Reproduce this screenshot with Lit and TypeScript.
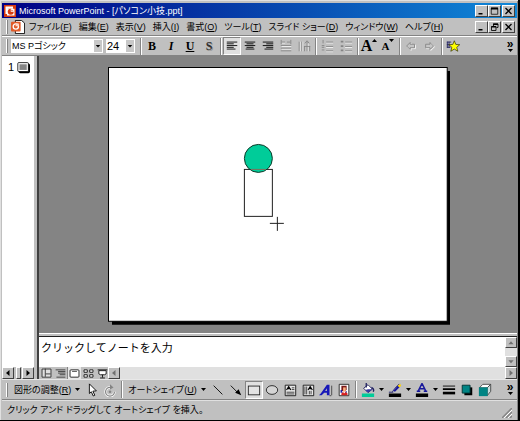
import { LitElement, html, svg, css, type TemplateResult } from "lit";
import { customElement, property } from "lit/decorators.js";
import { classMap } from "lit/directives/class-map.js";

const ICONS: Record<string, TemplateResult> = {
  app: svg`<rect width="16" height="16" fill="#d63c10"/><path d="M2 2h10v3H5v7H2z" fill="#fff"/><path d="M4 5h10v9H4z" fill="#fff"/><circle cx="9" cy="9" r="4" fill="#d63c10"/><path d="M9 9V4.500A4.500 4.500 0 0 1 13.500 9z" fill="#fff"/><path d="M10 8V6l2 2z" fill="#d63c10"/>`,
  doc: svg`<path d="M5 .5h7l3.500 3v12H5z" fill="#fff" stroke="#000"/><rect y="2" width="11" height="11" rx="1" fill="#e05a28"/><circle cx="5.500" cy="7.500" r="3" fill="none" stroke="#fff" stroke-width="1.500"/><path d="M5 7h4V4H6z" fill="#ffd8c8"/>`,
  left: svg`<path d="M2 3.500h12M2 5.500h8M2 7.500h12M2 9.500h8M2 11.500h10" stroke="#000"/>`,
  center: svg`<path d="M2 3.500h12M4 5.500h8M2 7.500h12M4 9.500h8M3 11.500h10" stroke="#000"/>`,
  right: svg`<path d="M2 3.500h12M6 5.500h8M2 7.500h12M6 9.500h8M4 11.500h10" stroke="#000"/>`,
  distribute: svg`<path d="M3 4.500h4M3 8.500h11M3 11.500h11" stroke="#fff"/><path d="M2.500 1v5M13.500 1v5M3 3.500h4M9 3.500h4M2 7.500h12M2 10.500h12M2 13.500h12" stroke="#848484"/>`,
  vertical: svg`<path d="M3.500 3v11M6.500 3v11M12.500 5v9" stroke="#fff"/><path d="M2.500 3v11M5.500 3v11M8.500 8v6M11.500 3v11M9 5l2.500-3L14 5M14.500 8v6M8 8.500h7" fill="none" stroke="#848484"/>`,
  numbers: svg`<path d="M7 4.500h8M7 9.500h8M7 14.500h8" stroke="#fff"/><path d="M3.500 1v4M2 7.500h3M2 9.500h3M2 12.500h3M7 3.500h8M7 8.500h8M7 13.500h8" stroke="#848484"/>`,
  bullets: svg`<path d="M7 4.500h8M7 9.500h8M7 14.500h8" stroke="#fff"/><path d="M2 2h3v2H2zM2 7h3v2H2zM2 12h3v2H2z" fill="#848484"/><path d="M7 3.500h8M7 8.500h8M7 13.500h8" stroke="#848484"/>`,
  back: svg`<path d="M8 5L4 9l4 4v-2h5V7H8z" fill="none" stroke="#fff"/><path d="M7 4L3 8l4 4v-2h5V6H7z" fill="#c6c6c6" stroke="#848484"/>`,
  forward: svg`<path d="M9 5l4 4-4 4v-2H4V7h5z" fill="none" stroke="#fff"/><path d="M8 4l4 4-4 4v-2H3V6h5z" fill="#c6c6c6" stroke="#848484"/>`,
  star: svg`<path d="M1 3.500h5M1 6.500h3M1 9.500h4M1.500 3v7M3.500 3v7" stroke="#202060"/><path d="M9.500 2l1.700 4.200 4.500.3-3.400 3 1.200 4.500-4-2.500-4 2.500 1.200-4.500-3.400-3 4.500-.3z" fill="#ffff00" stroke="#303000" stroke-width=".8"/>`,
  pointer: svg`<path d="M5 1l8 8-4 .3 2.200 4.700-1.800.8L7.200 10 5 12z" fill="#fff" stroke="#000"/>`,
  rotate: svg`<path d="M13 10a5 5 0 1 1-5-5" fill="none" stroke="#fff" stroke-width="3"/><path d="M13 10a5 5 0 1 1-5-5" fill="none" stroke="#848484" stroke-width="1.500"/><path d="M8 1.500v6L12 5z" fill="#848484"/><circle cx="8" cy="10" r="1.500" fill="#848484"/>`,
  line: svg`<path d="M3 3l10 10" stroke="#000"/>`,
  arrow: svg`<path d="M2 3l8 8" stroke="#000"/><path d="M14 14L7 11l4-4z" fill="#000"/>`,
  rect: svg`<rect x="1.500" y="3.500" width="13" height="10" fill="#e4e4e4" stroke="#202020"/>`,
  oval: svg`<ellipse cx="8" cy="8" rx="6.500" ry="5" fill="#d4d4d4" stroke="#202020"/>`,
  textbox: svg`<path d="M2.500 2.500h12v12h-12z" fill="#e8e8e8" stroke="#101010"/><path d="M4 8l2.500-4L9 8M5 6.500h3" fill="none" stroke="#000" stroke-width="1.300"/><path d="M10 5.500h3M10 7.500h3M4 10.500h9M4 12.500h9" stroke="#303030"/>`,
  vtextbox: svg`<path d="M2.500 2.500h12v12h-12z" fill="#e8e8e8" stroke="#101010"/><path d="M8 8l2.500-4L13 8M9 6.500h3" fill="none" stroke="#000" stroke-width="1.300"/><path d="M4.500 4v9M6.500 4v9M9.500 9v4M11.500 9v4" stroke="#303030"/>`,
  wordart: svg`<path d="M0 14l2-2 7-10h3v12H9v-3H6l-3 3zM7 9h2V6z" fill="#1818b8" fill-rule="evenodd"/><path d="M14.500 3v11M12 14.500h2" stroke="#404040"/>`,
  clipart: svg`<path d="M2.500 1.500h11v13h-11z" fill="#fff" stroke="#202020"/><path d="M5 3h6v4l-1 2H5z" fill="#7a1818"/><path d="M7 5h3v5H7z" fill="#ffb080"/><path d="M5 14v-2l2-2 1 2 2-2 2 2v2z" fill="#d82020"/><path d="M4 8h2v3H4zM10 9h1v2h-1z" fill="#2020a0"/>`,
  fill: svg`<path d="M3 6l5-4 5 5-5 4z" fill="#fff" stroke="#202060"/><path d="M8 7l5 0-5 4-3-3z" fill="#3838a0"/><path d="M6 0v5M12 5c2 1 3 3 2 5" stroke="#202060" fill="none" stroke-width="1.500"/><path d="M1 12h14v4H1z" fill="#00cc99"/>`,
  pen: svg`<path d="M1 10.500h5M5 10l3-4 5-5" stroke="#18186c" fill="none"/><path d="M6 9l5-6 3 1-6 6z" fill="#18189c"/><path d="M11 3l3-2 1 2-2 2z" fill="#ffd800"/><path d="M1 12h14v4H1z" fill="#000"/>`,
  fontcolor: svg`<path d="M3.500 9.500L8 .5l4.500 9M5.500 6.500h5M2 9.500h4M10 9.500h4" fill="none" stroke="#18189c" stroke-width="1.700"/><path d="M1 12h14v4H1z" fill="#000"/>`,
  weights: svg`<path d="M1 3.500h14" stroke="#000"/><path d="M1 7h14" stroke="#000" stroke-width="2"/><path d="M1 11.500h14" stroke="#000" stroke-width="3"/>`,
  shadow: svg`<path d="M5 5h9v9H5z" fill="#000"/><path d="M2.500 2.500h9v9h-9z" fill="#008484" stroke="#003030"/>`,
  cube: svg`<path d="M1.500 5.500l4-4h9l-4 4z" fill="#fff" stroke="#404040"/><path d="M10.500 5.500l4-4v8l-4 5z" fill="#c8dcdc" stroke="#404040"/><path d="M1 5h10v10H1z" fill="#008484"/>`,
  normalview: svg`<path d="M2.500 2.500h11v10h-11zM6.500 2v10M7 8.500h6" fill="#e0e0e0" stroke="#202020"/>`,
  outline: svg`<path d="M2 3.500h12M5 5.500h9M5 7.500h9M7 9.500h7M3 12.500h11" stroke="#303030"/>`,
  slideview: svg`<rect x="2.500" y="3.500" width="11" height="9" rx="1" fill="#fff" stroke="#000"/><path d="M5 5.500h6" stroke="#404040"/>`,
  sorter: svg`<path d="M2.500 3.500h4v3h-4zM9.500 3.500h4v3h-4zM2.500 9.500h4v3h-4zM9.500 9.500h4v3h-4z" fill="#fff" stroke="#000"/>`,
  show: svg`<path d="M2 3.500h12M8 9v4M5 13.500h6" stroke="#000"/><path d="M3.500 4.500h9v4l-2 1h-5l-2-1z" fill="#fff" stroke="#000"/>`,
  slide: svg`<rect x="2" y="3" width="14" height="12" rx="2" fill="#000"/><rect x="1" y="2" width="13" height="11" rx="1" fill="#fff" stroke="#000"/><path d="M3 4h9v7H3z" fill="#848484"/>`,
  min: svg`<path d="M2 12h8v3H2z" fill="#000"/>`,
  max: svg`<path d="M1.500 2.500h13v12h-13z" fill="none" stroke="#000" stroke-width="1.500"/><path d="M1 1h14v4H1z"/>`,
  restore: svg`<path d="M6 2h9v7h-3M6 2v4M2 7h9v8H2z" fill="none" stroke="#000" stroke-width="1.700"/><path d="M5 1h10v3H5zM2 6h9v3H2z"/>`,
  close: svg`<path d="M2 2l12 12M14 2L2 14" stroke="#000" stroke-width="2.600"/>`,
  up: svg`<path d="M2 12h12L8 5z"/>`,
  down: svg`<path d="M2 5h12l-6 7z"/>`,
  prev: svg`<path d="M11 2v12L4 8z"/>`,
  next: svg`<path d="M5 2v12l7-6z"/>`,
};

const icon = (name: string) =>
  html`<svg class="icon" viewBox="0 0 16 16" aria-hidden="true">${ICONS[name]}</svg>`;

const shared = css`
  * { box-sizing: border-box; }
  button {
    font: inherit; color: inherit; background: none; border: 0; padding: 0; margin: 0;
    display: flex; align-items: center; justify-content: center; flex: none;
  }
  .icon { display: block; width: 100%; height: 100%; }
`;

@customElement("tool-button")
class ToolButton extends LitElement {
  static styles = [shared, css`
    :host { display: block; flex: none; }
    button { width: 18px; height: 18px; padding: 1px; border: 1px solid transparent; }
    .pressed { background: #e0e0e0; border-color: #848484 #fff #fff #848484; }
    .icon { width: 14px; height: 14px; flex: none; }
  `];
  @property() name = "";
  @property() label = "";
  @property({ type: Boolean }) pressed = false;
  render() {
    return html`<button aria-label=${this.label} aria-pressed=${this.pressed}
      class=${classMap({ pressed: this.pressed })}>${icon(this.name)}</button>`;
  }
}

const tool = (name: string, label: string, pressed = false) =>
  html`<tool-button .name=${name} .label=${label} .pressed=${pressed}></tool-button>`;

const MENUS: [string, string][] = [
  ["ファイル", "F"], ["編集", "E"], ["表示", "V"], ["挿入", "I"], ["書式", "O"],
  ["ツール", "T"], ["スライド ショー", "D"], ["ウィンドウ", "W"], ["ヘルプ", "H"],
];

@customElement("app-root")
class AppRoot extends LitElement {
  static styles = [shared, css`
    :host {
      display: flex; flex-direction: column; box-sizing: border-box; min-height: 100vh;
      padding: 3px 1px 1px 2px; background: #c0c0c0; color: #000;
      border: solid #000; border-width: 0 2px 1px 0;
      box-shadow: inset 1px 1px #e0e0e0, inset -1px 0 #848484;
      font: 9px/14px "Liberation Sans", "Noto Sans CJK JP", sans-serif;
      font-feature-settings: "palt"; white-space: nowrap;
    }
    .bar { display: flex; align-items: center; flex: none; }
    .title {
      height: 15px; gap: 3px; padding: 0 2px; color: #fff;
      background: linear-gradient(90deg, #000084, #0850b4 60%, #1088d8);
    }
    .title h1 { font: inherit; margin: 0; flex: 1; }
    .title .mark .icon { width: 12px; height: 12px; }
    .controls { display: flex; color: #000; flex: none; }
    .controls button, .scroll {
      width: 12px; height: 11px; padding: 1px; background: #c0c0c0;
      border: 1px solid; border-color: #fff #404040 #404040 #fff;
    }
    .controls button { width: 13px; height: 12px; }
    .controls .last { margin-left: 1px; }
    .menu { height: 18px; border-bottom: 1px solid #848484; padding: 0 2px; }
    .menu .mark .icon { width: 14px; height: 14px; margin-right: 4px; }
    .menu nav { display: flex; flex: 1; gap: 7px; }
    .grip { width: 2px; height: 14px; margin: 0 3px 0 2px; border-left: 1px solid #fff; border-right: 1px solid #848484; flex: none; }
    .format { height: 20px; border-top: 1px solid #fff; border-bottom: 1px solid #848484; padding: 0 2px; }
    .combo { position: relative; height: 14px; background: #fff; margin-right: 3px; flex: none; }
    .font { width: 92px; }
    .size { width: 29px; }
    .combo select {
      appearance: none; display: block; width: 100%; height: 14px; border: 0; margin: 0; padding: 0 8px 0 1px;
      font: 9px/14px "Liberation Sans", "Noto Sans CJK JP", sans-serif; font-feature-settings: "palt"; background: none; color: #000;
    }
    .combo.size select { font-size: 11px; }
    .combo .icon { position: absolute; right: 1px; top: 1px; width: 8px; height: 12px; background: #c8c8c8; pointer-events: none; padding: 1px; }
    .group { display: flex; gap: 1px; flex: none; }
    .tight { gap: 0; }
    .sep { width: 2px; height: 17px; margin: 0 2px; border-left: 1px solid #848484; border-right: 1px solid #fff; flex: none; }
    .format .sep { margin-right: 1px; }
    .letter { width: 18px; height: 18px; font: bold 12px/14px "Liberation Serif", serif; }
    .italic { font-style: italic; }
    .under { text-decoration: underline; }
    .emboss { color: #303030; text-shadow: 1px 1px #949494; }
    .grow { font-size: 16px; }
    .shrink { font-size: 11px; }
    .tick { width: 5px; height: 5px; align-self: flex-start; margin-top: 1px; flex: none; }
    .spacer { flex: 1; }
    .more { width: 10px; flex-direction: column; font: bold 12px/8px "Liberation Sans", sans-serif; }

    .work { display: flex; flex: 1; min-height: 0; }
    .outline { width: 32px; display: flex; flex-direction: column; background: #c0c0c0; flex: none; }
    .outline ol { flex: 1; list-style: none; margin: 0; padding: 4px 0 0; background: #fff; }
    .outline li button { gap: 3px; margin-left: 6px; font-size: 11px; }
    .outline li .icon { width: 13px; height: 13px; }
    .foot { display: flex; height: 12px; flex: none; align-items: stretch; }
    .foot .scroll { height: 12px; }
    .track { flex: 1; background: #e0e0e0; }
    .thumb { width: 5px; margin: 0 auto; background: #c0c0c0; border: 1px solid; border-color: #fff #404040 #404040 #fff; }
    .main { display: flex; flex-direction: column; flex: 1; min-width: 0; margin-left: 3px; border-left: 2px solid #404040; }
    .stage { flex: 1; background: #848484; display: flex; justify-content: center; padding: 11px 0 7px 2px; }
    .slide { width: 72%; display: block; margin: 0 auto auto; }
    .split { height: 4px; border-bottom: 1px solid #202020; border-top: 1px solid #fff; flex: none; }
    .notes { display: flex; height: 30px; flex: none; }
    .notes textarea {
      flex: 1; min-width: 0; border: 0; margin: 0; padding: 3px 2px; resize: none; outline: 0; background: #fff; color: #000;
      font: 11px/14px "Noto Sans CJK JP", sans-serif; font-feature-settings: normal; overflow: hidden;
    }
    .vscroll { display: flex; flex-direction: column; width: 12px; }
    .dim { fill: #707070; }
    .views { display: flex; width: 69px; flex: none; }
    .views button { width: 14px; height: 12px; }
    .views .icon { width: 13px; height: 13px; flex: none; }
    .views .on { background: #e8e8e8; box-shadow: inset 1px 0 #848484; }

    .draw { height: 21px; border-top: 1px solid #e8e8e8; border-bottom: 1px solid #848484; padding: 0 2px; }
    .word { padding: 0 3px; gap: 4px; height: 18px; }
    .drop { width: 9px; height: 18px; }
    .caret { width: 5px; height: 5px; flex: none; }
    .status { height: 19px; padding: 0 5px; justify-content: space-between; border-top: 1px solid #e0e0e0; }
    .resize { width: 10px; height: 10px; align-self: flex-end; margin-bottom: 1px; }
  `];

  private controls(middle: string) {
    return html`<div class="controls">
      <button aria-label="最小化">${icon("min")}</button>
      <button aria-label="サイズ変更">${icon(middle)}</button>
      <button class="last" aria-label="閉じる">${icon("close")}</button>
    </div>`;
  }

  private caret() {
    return html`<svg class="caret" viewBox="0 0 5 5" aria-hidden="true"><path d="M0 1h5L2.500 4z"/></svg>`;
  }

  private more() {
    return html`<button class="more" aria-label="その他のボタン"><span>»</span>${this.caret()}</button>`;
  }

  private tick(d: string) {
    return html`<svg class="tick" viewBox="0 0 5 5" aria-hidden="true"><path d=${d}/></svg>`;
  }

  render() {
    return html`
      <header class="bar title"><span class="mark">${icon("app")}</span><h1>Microsoft PowerPoint - [パソコン小技.ppt]</h1>${this.controls("max")}</header>
      <div class="bar menu"><span class="grip"></span><span class="mark">${icon("doc")}</span>
        <nav>${MENUS.map(([t, k]) => html`<button><span>${t}(<u>${k}</u>)</span></button>`)}</nav>
        ${this.controls("restore")}
      </div>
      <div class="bar format" role="toolbar"><span class="grip"></span>
        <div class="combo font"><select aria-label="フォント"><option>MS Pゴシック</option></select>${icon("down")}</div>
        <div class="combo size"><select aria-label="フォント サイズ"><option>24</option></select>${icon("down")}</div>
        <span class="sep"></span>
        <div class="group">
          <button class="letter">B</button><button class="letter italic">I</button>
          <button class="letter under">U</button><button class="letter emboss">S</button>
        </div><span class="sep"></span>
        <div class="group tight">
          ${tool("left", "左揃え", true)}${tool("center", "中央揃え")}${tool("right", "右揃え")}
          ${tool("distribute", "均等割り付け")}${tool("vertical", "縦書き")}
        </div><span class="sep"></span>
        <div class="group">${tool("numbers", "段落番号")}${tool("bullets", "箇条書き")}</div><span class="sep"></span>
        <div class="group">
          <button class="letter grow" aria-label="拡大">A${this.tick("M0 4h5L2.500 1z")}</button>
          <button class="letter shrink" aria-label="縮小">A${this.tick("M0 1h5L2.500 4z")}</button>
        </div><span class="sep"></span>
        <div class="group">${tool("back", "レベル上げ")}${tool("forward", "レベル下げ")}</div><span class="sep"></span>
        ${tool("star", "アニメーション効果")}
        <span class="spacer"></span>${this.more()}
      </div>

      <div class="work">
        <aside class="outline">
          <ol><li><button><span>1</span>${icon("slide")}</button></li></ol>
          <div class="foot">
            <button class="scroll" aria-label="左へ">${icon("prev")}</button>
            <span class="thumb"></span>
            <button class="scroll" aria-label="右へ">${icon("next")}</button>
          </div>
        </aside>
        <main class="main">
          <div class="stage">
            <svg class="slide" viewBox="0 0 343 258" role="img" aria-label="スライド 1">
              <path d="M4 4h339v254H4z" fill="#000"/>
              <rect x=".5" y=".5" width="339" height="254" fill="#fff" stroke="#000"/>
              <rect x="136.500" y="102.500" width="28" height="47" fill="#fff" stroke="#202020"/>
              <circle cx="150.500" cy="91.500" r="14" fill="#00cc99" stroke="#103828"/>
              <path d="M143 102.500h15" stroke="#80705c"/>
              <path d="M162 156.500h14M169.500 150v14" stroke="#202020"/>
            </svg>
          </div>
          <div class="split"></div>
          <div class="notes">
            <textarea aria-label="ノート" .value=${"クリックしてノートを入力"}></textarea>
            <div class="vscroll">
              <button class="scroll dim" aria-label="上へ">${icon("up")}</button>
              <span class="track"></span>
              <button class="scroll dim" aria-label="下へ">${icon("down")}</button>
            </div>
          </div>
          <div class="foot">
            <div class="views">
              <button aria-label="標準表示">${icon("normalview")}</button>
              <button aria-label="アウトライン表示">${icon("outline")}</button>
              <button class="on" aria-label="スライド表示">${icon("slideview")}</button>
              <button aria-label="スライド一覧表示">${icon("sorter")}</button>
              <button aria-label="スライド ショー">${icon("show")}</button>
            </div>
            <button class="scroll dim" aria-label="左へ">${icon("prev")}</button>
            <span class="track"></span>
            <button class="scroll dim" aria-label="右へ">${icon("next")}</button>
          </div>
        </main>
      </div>

      <div class="bar draw" role="toolbar"><span class="grip"></span>
        <button class="word"><span>図形の調整(<u>R</u>)</span>${this.caret()}</button>
        ${tool("pointer", "オブジェクトの選択")}${tool("rotate", "自由に回転")}<span class="sep"></span>
        <button class="word"><span>オートシェイプ(<u>U</u>)</span>${this.caret()}</button>
        ${tool("line", "直線")}${tool("arrow", "矢印")}${tool("rect", "四角形", true)}
        ${tool("oval", "楕円")}${tool("textbox", "テキスト ボックス")}${tool("vtextbox", "縦書きテキスト ボックス")}
        ${tool("wordart", "ワードアート")}${tool("clipart", "クリップアート")}<span class="sep"></span>
        ${tool("fill", "塗りつぶしの色")}<button class="drop" aria-label="塗りつぶしの色を選ぶ">${this.caret()}</button>
        ${tool("pen", "線の色")}<button class="drop" aria-label="線の色を選ぶ">${this.caret()}</button>
        ${tool("fontcolor", "フォントの色")}<button class="drop" aria-label="フォントの色を選ぶ">${this.caret()}</button>
        ${tool("weights", "線の太さ")}${tool("shadow", "影")}${tool("cube", "3-D")}
        <span class="spacer"></span>${this.more()}
      </div>
      <footer class="bar status"><span>クリック アンド ドラッグして オートシェイプ を挿入。</span>
        <svg class="resize" viewBox="0 0 10 10" aria-hidden="true">
          <path d="M0 10L10 0M4 10l6-6M8 10l2-2" stroke="#848484" stroke-width="1.500"/><path d="M2 10l8-8M6 10l4-4" stroke="#fff"/>
        </svg>
      </footer>`;
  }
}
